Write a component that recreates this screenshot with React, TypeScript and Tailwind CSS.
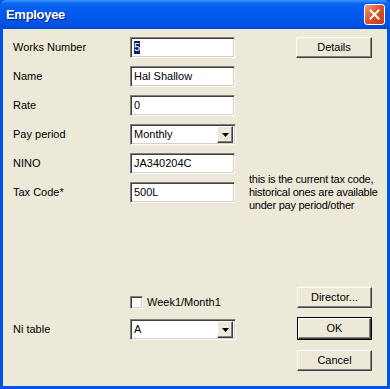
import React from "react";

const FONT = { fontFamily: '"Liberation Sans", Arial, sans-serif' };

function TextBox({ value, selected }: { value: string; selected?: boolean }) {
  return (
    <div className="w-[105px] h-[21px] shrink-0 bg-white border border-t-[#808080] border-l-[#808080] border-b-white border-r-white shadow-[inset_1px_1px_0_#404040,inset_-1px_-1px_0_#d4d0c8] flex items-center pl-[3px] text-[11px] text-black">
      {selected ? <span className="bg-[#0a246a] text-white leading-[13px]">{value}</span> : value}
    </div>
  );
}

function Select({ value }: { value: string }) {
  return (
    <div className="w-[106px] h-[21px] shrink-0 bg-white border border-t-[#808080] border-l-[#808080] border-b-white border-r-white shadow-[inset_1px_1px_0_#404040,inset_-1px_-1px_0_#d4d0c8] flex items-center pl-[3px] pr-[2px] text-[11px] text-black">
      <span className="flex-1">{value}</span>
      <div className="w-[16px] h-[17px] bg-[#ece9d8] border border-t-[#fff] border-l-[#fff] border-b-[#404040] border-r-[#404040] shadow-[inset_-1px_-1px_0_#808080] flex items-center justify-center">
        <svg width="7" height="4" viewBox="0 0 7 4">
          <path d="M0 0h7L3.5 4z" fill="#000" />
        </svg>
      </div>
    </div>
  );
}

function Button({ label, isDefault, w = 75 }: { label: string; isDefault?: boolean; w?: number }) {
  const inner = (
    <div
      className="h-[21px] bg-[#ece9d8] border border-t-white border-l-white border-b-[#404040] border-r-[#404040] shadow-[inset_-1px_-1px_0_#808080] flex items-center justify-center text-[11px] text-black"
      style={{ width: isDefault ? w - 2 : w }}
    >
      {label}
    </div>
  );
  if (isDefault) return <div className="border border-black">{inner}</div>;
  return inner;
}

function Row({ label, children, right }: { label: string; children: React.ReactNode; right?: React.ReactNode }) {
  return (
    <div className="h-[21px] flex items-center">
      <div className="w-[117px] shrink-0 text-[11px] text-black">{label}</div>
      {children}
      {right}
    </div>
  );
}

export default function App() {
  return (
    <div className="w-[390px] h-[389px] flex flex-col bg-[#0054e3]" style={FONT}>
      {/* Title bar */}
      <div className="h-[29px] flex items-center justify-between pl-[6px] pr-[5px] bg-[linear-gradient(to_bottom,#3d95ff_0%,#0a66f0_12%,#0058ee_45%,#0055e5_80%,#0046d5_100%)] rounded-t-[6px]">
        <span className="text-white font-bold text-[13px] tracking-[-0.3px] [text-shadow:1px_1px_0_#0a1f80]">Employee</span>
        <div className="w-[21px] h-[21px] rounded-[3px] border border-white bg-[linear-gradient(135deg,#f0a080_0%,#e0562c_45%,#c43a14_100%)] flex items-center justify-center">
          <svg width="11" height="11" viewBox="0 0 11 11">
            <path d="M1.5 1.5l8 8M9.5 1.5l-8 8" stroke="#fff" strokeWidth="2" strokeLinecap="square" />
          </svg>
        </div>
      </div>

      {/* Body */}
      <div className="flex-1 mx-[3px] mb-[3px] bg-[#ece9d8] pl-[10px] pr-[15px] pt-[8px] flex flex-col">
        <div className="flex flex-col gap-[8px]">
          <Row label="Works Number" right={<div className="ml-auto"><Button label="Details" w={76} /></div>}>
            <TextBox value="5" selected />
          </Row>
          <Row label="Name">
            <TextBox value="Hal Shallow" />
          </Row>
          <Row label="Rate">
            <TextBox value="0" />
          </Row>
          <Row label="Pay period">
            <Select value="Monthly" />
          </Row>
          <Row label="NINO">
            <TextBox value="JA340204C" />
          </Row>
          <Row
            label="Tax Code*"
            right={
              <div className="ml-[14px] text-[11px] leading-[13px] tracking-[-0.25px] text-black whitespace-nowrap">
                this is the current tax code,
                <br />
                historical ones are available
                <br />
                under pay period/other
              </div>
            }
          >
            <TextBox value="500L" />
          </Row>
        </div>

        <div className="mt-[84px] flex flex-col">
          <div className="h-[21px] flex">
            <div className="w-[117px] shrink-0" />
            <div className="flex items-center gap-[5px] mt-[9px] h-[13px] text-[11px] text-black">
              <div className="w-[13px] h-[13px] bg-white border border-t-[#808080] border-l-[#808080] border-b-white border-r-white shadow-[inset_1px_1px_0_#404040,inset_-1px_-1px_0_#d4d0c8]" />
              <span className="ml-[-1px]">Week1/Month1</span>
            </div>
            <div className="ml-auto">
              <Button label="Director..." w={75} />
            </div>
          </div>
          <div className="h-[23px] mt-[9px] flex items-end">
            <div className="w-[117px] shrink-0 text-[11px] text-black self-center pt-[1px]">Ni table</div>
            <Select value="A" />
            <div className="ml-auto">
              <Button label="OK" isDefault w={75} />
            </div>
          </div>
          <div className="h-[21px] mt-[10px] flex">
            <div className="ml-auto">
              <Button label="Cancel" w={75} />
            </div>
          </div>
        </div>
      </div>
    </div>
  );
}
